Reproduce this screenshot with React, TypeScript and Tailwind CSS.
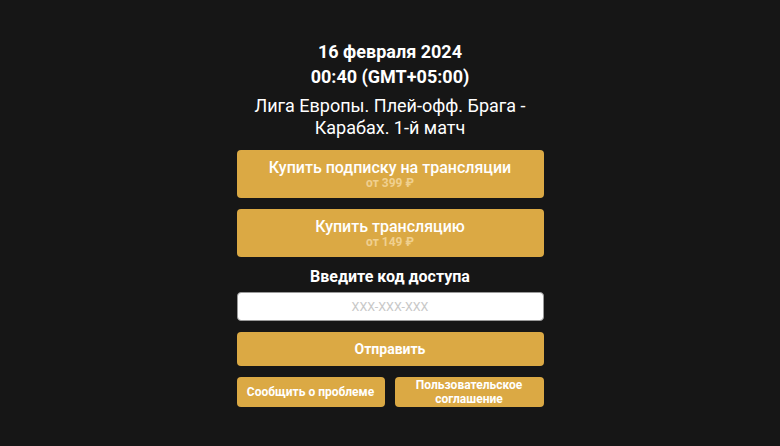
export default function App() {
  return (
    <div
      className="flex min-h-[446px] w-full justify-center bg-[#161616] text-white"
      style={{ fontFamily: "Roboto, 'Liberation Sans', sans-serif" }}
    >
      <div className="flex w-[307px] flex-col items-stretch pt-[39px]">
        <div className="text-center text-[18px] font-bold leading-[25px]">
          <div>16 февраля 2024</div>
          <div>00:40 (GMT+05:00)</div>
        </div>
        <div className="mt-[6px] text-center text-[18px] leading-[22px]">
          Лига Европы. Плей-офф. Брага - Карабах. 1-й матч
        </div>

        <button className="mt-[11px] flex h-[48px] flex-col items-center justify-center rounded-[4px] bg-[#dba944]">
          <span className="text-[16px] font-medium leading-[19px]">Купить подписку на трансляции</span>
          <span className="text-[12px] font-bold leading-[13px] text-[#f0d08f]">от 399 ₽</span>
        </button>
        <button className="mt-[11px] flex h-[48px] flex-col items-center justify-center rounded-[4px] bg-[#dba944]">
          <span className="text-[16px] font-medium leading-[19px]">Купить трансляцию</span>
          <span className="text-[12px] font-bold leading-[13px] text-[#f0d08f]">от 149 ₽</span>
        </button>

        <div className="mt-[10px] text-center text-[16px] font-bold leading-[20px]">Введите код доступа</div>
        <input
          className="mt-[5px] h-[29px] rounded-[4px] border border-[#9a9a9a] bg-white text-center text-[12.5px] text-black outline-none placeholder:text-[#c8c8c8]"
          placeholder="XXX-XXX-XXX"
        />

        <button className="mt-[11px] h-[34px] rounded-[4px] bg-[#dba944] text-[14px] font-bold">Отправить</button>

        <div className="mt-[11px] flex gap-[10px]">
          <button className="h-[30px] w-[148px] rounded-[4px] bg-[#dba944] text-[12px] font-bold leading-[14px]">
            Сообщить о проблеме
          </button>
          <button className="h-[30px] flex-1 rounded-[4px] bg-[#dba944] text-[12px] font-bold leading-[14px]">
            Пользовательское
            <br />
            соглашение
          </button>
        </div>
      </div>
    </div>
  );
}
